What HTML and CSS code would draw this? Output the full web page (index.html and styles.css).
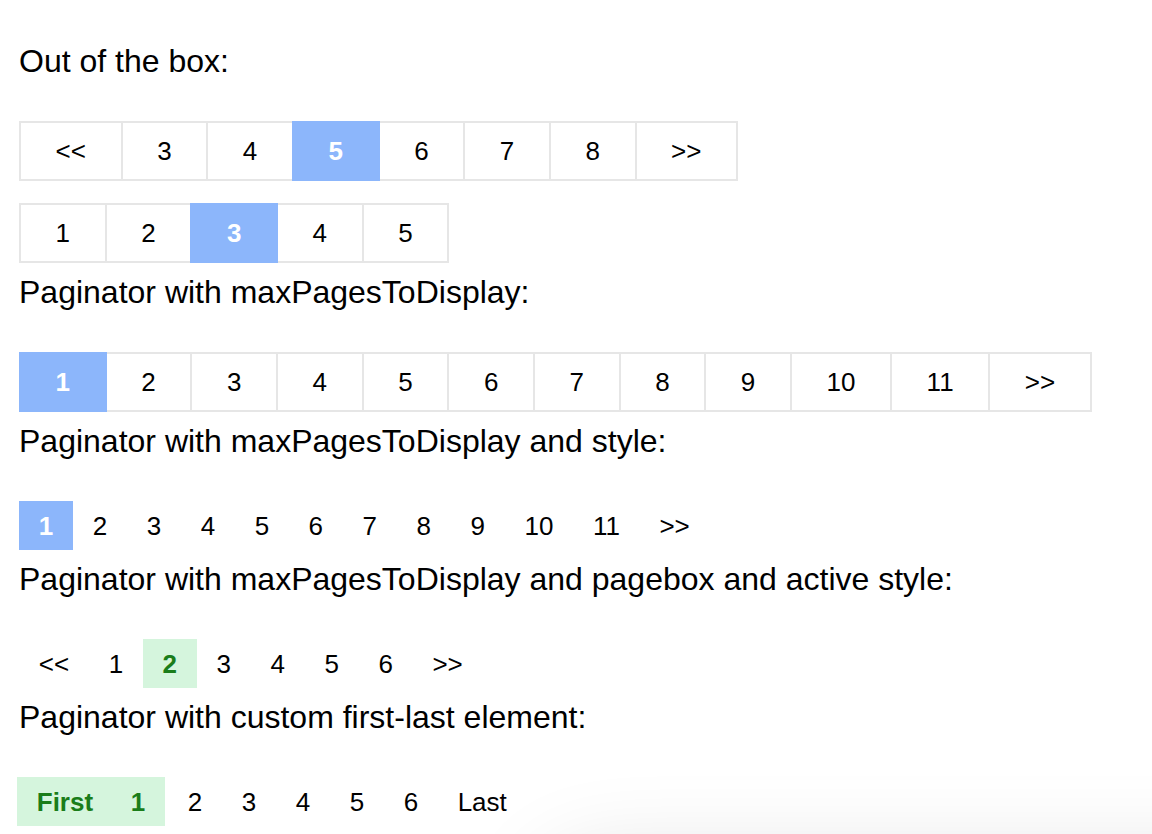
FILE: index.html
```html
<!DOCTYPE html>
<html lang="en">
<head>
    <meta charset="UTF-8">
    <meta name="viewport" content="width=device-width, initial-scale=1.0">
    <title>Paginator demo</title>
    <link rel="stylesheet" href="styles.css">
</head>
<body>
    <div class="container">
        <p class="title">Out of the box:</p>
        <ul class="pager boxed">
            <li>&lt;&lt;</li>
            <li>3</li>
            <li>4</li>
            <li class="active">5</li>
            <li>6</li>
            <li>7</li>
            <li>8</li>
            <li>&gt;&gt;</li>
        </ul>
        <ul class="pager boxed">
            <li>1</li>
            <li>2</li>
            <li class="active">3</li>
            <li>4</li>
            <li>5</li>
        </ul>

        <p class="title">Paginator with maxPagesToDisplay:</p>
        <ul class="pager boxed">
            <li class="active">1</li>
            <li>2</li>
            <li>3</li>
            <li>4</li>
            <li>5</li>
            <li>6</li>
            <li>7</li>
            <li>8</li>
            <li>9</li>
            <li>10</li>
            <li>11</li>
            <li>&gt;&gt;</li>
        </ul>

        <p class="title">Paginator with maxPagesToDisplay and style:</p>
        <ul class="pager plain">
            <li class="active">1</li>
            <li>2</li>
            <li>3</li>
            <li>4</li>
            <li>5</li>
            <li>6</li>
            <li>7</li>
            <li>8</li>
            <li>9</li>
            <li>10</li>
            <li>11</li>
            <li>&gt;&gt;</li>
        </ul>

        <p class="title">Paginator with maxPagesToDisplay and pagebox and active style:</p>
        <ul class="pager plain green">
            <li>&lt;&lt;</li>
            <li>1</li>
            <li class="active">2</li>
            <li>3</li>
            <li>4</li>
            <li>5</li>
            <li>6</li>
            <li>&gt;&gt;</li>
        </ul>

        <p class="title">Paginator with custom first-last element:</p>
        <ul class="pager plain green first-last">
            <li class="active">First</li>
            <li class="active">1</li>
            <li>2</li>
            <li>3</li>
            <li>4</li>
            <li>5</li>
            <li>6</li>
            <li>Last</li>
        </ul>
    </div>

    <div class="toast-shadow"></div>
</body>
</html>
```

FILE: styles.css
```css
body {
    margin: 0;
    padding: 0;
    background-color: #fff;
    color: #000;
    font-family: "Liberation Sans", Arial, Helvetica, sans-serif;
    overflow: hidden;
}
.container {
    padding: 43px 0 0 19px;
}
.title {
    margin: 0 0 42px 0;
    font-size: 32px;
    line-height: 36px;
}
.pager {
    display: flex;
    list-style: none;
    margin: 0 0 11px 0;
    padding: 0;
    font-size: 26px;
    line-height: 30px;
}
.pager + .pager {
    margin-top: 22px;
}
.pager li {
    text-align: center;
    cursor: pointer;
}

/* default look with borders */
.boxed li {
    border: 2px solid #e6e6e6;
    padding: 13px 34.6px;
    margin-left: -2px;
}
.boxed li:first-child {
    margin-left: 0;
}
.boxed li.active {
    background-color: #8cb6fb;
    border-color: #8cb6fb;
    color: #fff;
    font-weight: bold;
    position: relative;
}

/* no borders */
.plain li {
    padding: 9.5px 19.75px;
}
.plain li.active {
    background-color: #8cb6fb;
    color: #fff;
    font-weight: bold;
}
.green li.active {
    background-color: #d5f5dd;
    color: #1a7d1a;
}
.first-last {
    margin-left: -2px;
}
.first-last li:first-child {
    padding-right: 18px;
}
.first-last li:nth-child(2) {
    margin-right: 3px;
}

.toast-shadow {
    position: fixed;
    left: 560px;
    top: 880px;
    width: 700px;
    height: 120px;
    background: #fff;
    box-shadow: 0 0 90px 24px rgba(0, 0, 0, 0.12);
    border-radius: 40px;
}
```
